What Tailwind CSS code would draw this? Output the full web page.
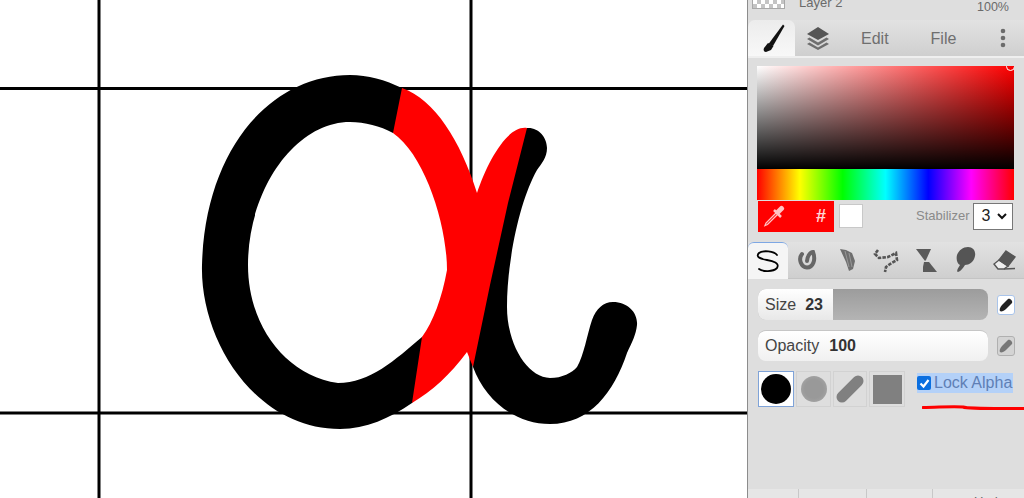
<!DOCTYPE html>
<html lang="en">
<head>
  <meta charset="UTF-8" />
  <title>Lock Alpha</title>
  <script src="https://cdn.jsdelivr.net/npm/@tailwindcss/browser@4"></script>
</head>
<body class="w-[1024px] h-[498px] overflow-hidden flex font-['Liberation_Sans',Arial,sans-serif] bg-white">

  <!-- canvas -->
  <svg class="w-[747px] h-[498px] shrink-0" viewBox="0 0 747 498">
    <path d="M99 0V498M471 0V498M0 88.500H747M0 413H747" stroke="#000" stroke-width="3" fill="none"/>
    <!-- black part of the letter -->
    <path fill="#000" d="M406 90L402 88C385 80 368 75 350 75C270 75 205 150 202 265C200 340 255 429 340 429C366 429 390 418 412 403L418 396L428 335L422 337C395 360 370 383 338 383C285 375 248 325 248 265C248 190 295 122 350 122C365 122 380 126 393 133L400 133Z"/>
    <path fill="#000" d="M523 131L527 128C538 127 547 137 547 148C547 158 541 164 537 170C520 200 507 260 507 307C507 345 528 378 550 378C562 378 572 373 577 367C584 355 587 335 592 320C596 309 603 302 613 302C628 302 638 313 637 325C636 335 632 342 627 353C614 392 590 424 550 424C515 424 485 400 473 367L472 350Z"/>
    <!-- red part -->
    <path fill="#f00" d="M402 88C435 100 460 140 477 193C488 160 508 125 527 128L508 203L490 285L473 367L467 352C450 375 432 391 412 403L422 337C433 322 442 298 447 270C447 225 425 155 393 133Z"/>
  </svg>

  <!-- side panel -->
  <div class="w-[277px] h-[498px] shrink-0 bg-[#dedede] border-l-[1px] border-[#8c8c8c] flex flex-col overflow-hidden">

    <!-- layer row (cut off at the top) -->
    <div class="h-[20px] flex items-start pl-[4px] pr-[15px] text-[13px] text-[#6a6a6a] shrink-0">
      <div class="w-[33px] h-[9px] border border-[#a8a8a8] border-t-0 bg-[repeating-conic-gradient(#c4c4c4_0_25%,#ffffff_0_50%)] bg-[length:8px_8px]"></div>
      <span class="ml-[14px] -mt-[5px] leading-[15px]">Layer 2</span>
      <span class="ml-auto mt-0 leading-[15px] text-[12.500px]">100%</span>
    </div>

    <!-- tabs -->
    <div class="h-[36px] flex items-center shrink-0 bg-[linear-gradient(to_bottom,#e2e2e2,#cfcfcf)] text-[16px] text-[#6f6f6f]">
      <div class="w-[47px] h-[36px] bg-[linear-gradient(to_bottom,#ececec,#f8f8f8)] rounded-t-[7px] flex items-center justify-center">
        <svg width="30" height="36" viewBox="756 20 30 36" fill="#111"><path d="M782 24.500L783.500 26L772 46L767.500 44Z"/><path d="M767 43L772.500 46L770 50L765 52C763 52 762 50 763 48Z"/></svg>
      </div>
      <svg class="ml-[11px]" width="24" height="24" viewBox="0 0 24 24"><path fill="#555" d="M12 1L23 8L12 14L1 8Z"/><path fill="#6e6e6e" d="M3.500 11.500L12 16.500L20.500 11.500L23 13L12 19.500L1 13Z"/><path fill="#6e6e6e" d="M3.500 16.500L12 21.500L20.500 16.500L23 18L12 24L1 18Z"/></svg>
      <span class="ml-[31px] pt-[2px]">Edit</span>
      <span class="ml-[42px] pt-[2px]">File</span>
      <svg class="ml-auto mr-[18px]" width="6" height="20" viewBox="0 0 6 20" fill="#6b6b6b"><circle cx="3" cy="3" r="2.300"/><circle cx="3" cy="10" r="2.300"/><circle cx="3" cy="17" r="2.300"/></svg>
    </div>

    <!-- colour picker -->
    <div class="border-t-[2px] border-[#efefef] pt-[8px] pl-[9px] shrink-0">
      <div class="relative overflow-hidden w-[257px] h-[103px] bg-[linear-gradient(to_bottom,transparent,#000),linear-gradient(to_right,#fff,#f00)]">
        <div class="absolute -right-[1px] -top-[4px] w-[9px] h-[9px] rounded-full border border-white"></div>
      </div>
      <div class="w-[257px] h-[31px] bg-[linear-gradient(to_right,#f00,#ff0,#0f0,#0ff,#00f,#f0f,#f00)]"></div>
      <div class="flex items-center h-[32px]">
        <div class="ml-[1px] w-[76px] h-[31px] bg-[#f00] flex items-center justify-between pl-[4px] pr-[8px] text-[#ffd6d6] text-[18px] font-bold">
          <svg width="24" height="23" viewBox="762 206 24 23" fill="none" stroke="#ffc4c4"><path d="M778 213L781.500 209.500" stroke-width="5" stroke-linecap="round"/><path d="M774 211L781 218" stroke-width="2.500"/><path d="M776 214L766 224L765 226.500L767.500 225.500L777.500 215.500" stroke-width="1.300"/></svg>
          <span>#</span>
        </div>
        <div class="ml-[5px] w-[24px] h-[24px] bg-white border border-[#c8c8c8]"></div>
        <span class="ml-[53px] text-[13px] text-[#8a8a8a]">Stabilizer</span>
        <div class="ml-[4px] w-[40px] h-[27px] bg-white border border-[#777] flex items-center justify-between pl-[7px] pr-[5px] text-[16px] text-[#222]">
          <span>3</span>
          <svg width="10" height="7" viewBox="0 0 10 7" fill="none" stroke="#111" stroke-width="2"><path d="M1 1L5 5L9 1"/></svg>
        </div>
      </div>
    </div>

    <!-- brush type tabs -->
    <div class="mt-[10px] h-[37px] flex items-center shrink-0 bg-[linear-gradient(to_bottom,#e2e2e2,#cfcfcf)] border-b border-[#c4c4c4]">
      <div class="w-[40px] h-[37px] bg-[#f5f5f5] border-t-[1px] border-[#7da7e4] rounded-t-[6px] flex items-center justify-center">
        <svg width="26" height="24" viewBox="0 0 26 24" fill="none" stroke="#000" stroke-width="1.800" stroke-linecap="round"><path d="M22 6C19 2 8 1 4 4C0 8 6 10 12 11C18 12 25 14 22 19C18 23 8 23 4 20"/></svg>
      </div>
      <svg class="ml-[9px] blur-[0.5px]" width="22" height="30" viewBox="797 246 22 30" fill="none" stroke="#666" stroke-width="4" stroke-linecap="round"><path d="M802 255C798 260 801 268 807 268.500C813 268.500 816 261 813 253C810 253 807 258 807 262"/></svg>
      <svg class="ml-[19px] blur-[0.4px]" width="20" height="30" viewBox="838 246 20 30"><path fill="#6f6f6f" d="M840 250L846 251L852 254L855 262L853 270L849 272L846 263Z"/><path d="M845 252L849 268M849 254L852 268" stroke="#999" stroke-width="1"/></svg>
      <svg class="ml-[13px]" width="29" height="30" viewBox="871 246 29 30" fill="none" stroke="#555" stroke-width="2.600" stroke-dasharray="3.500 1.200"><path d="M878 251L875 255L879 259L888 258L896 254L897 261L890 265L886 268L885 273"/></svg>
      <svg class="ml-[14px]" width="25" height="30" viewBox="914 246 25 30" fill="#5a5a5a"><path d="M916 250H931L926 261L925 262Z"/><path d="M924 263H929L937 273H923L923 268Z"/></svg>
      <svg class="ml-[15px]" width="24" height="30" viewBox="954 246 24 30" fill="#555"><path d="M968 248C973 248 976 252 975 257C974 263 969 266 965 266C963 269 961 272 958 273C956 273 958 269 960 266C957 265 956 260 957 256C959 251 963 248 968 248Z"/></svg>
      <svg class="ml-[14px]" width="26" height="30" viewBox="992 246 26 30" fill="none" stroke="#555" stroke-width="1.400"><path d="M999 261L1008 267L1004 270H998L994 265Z" fill="#eee"/><path d="M1006 252L1015 258L1008 267L999 261Z" fill="#555"/><path d="M1004 270L1015 269.500"/></svg>
    </div>

    <!-- size, opacity -->
    <div class="pl-[10px] pr-[9px] pt-[10px] flex flex-col gap-[10px] shrink-0">
      <div class="flex items-center justify-between">
        <div class="w-[230px] h-[31px] rounded-[8px] overflow-hidden flex items-center bg-[linear-gradient(to_bottom,#9c9c9c,#b4b4b4)] text-[16px] text-[#444]">
          <div class="w-[75px] h-full bg-[linear-gradient(to_bottom,#ffffff,#e8e8e8)] flex items-center pl-[7px]">
            <span>Size</span><b class="ml-[9px] text-[#333]">23</b>
          </div>
        </div>
        <div class="w-[18px] h-[20px] rounded-[3px] bg-white border border-[#a9c4ea] flex items-center justify-center">
          <svg width="14" height="14" viewBox="0 0 14 14" fill="#222"><path d="M9 1C11 0 14 3 13 5L7 11C5 13 2 14 1 13C0 12 1 9 3 7Z"/></svg>
        </div>
      </div>
      <div class="flex items-center justify-between">
        <div class="w-[230px] h-[31px] rounded-[8px] bg-[linear-gradient(to_bottom,#ffffff,#f0f0f0)] border-t border-[#c6c6c6] flex items-center pl-[7px] text-[16px] text-[#444]">
          <span>Opacity</span><b class="ml-[10px] text-[#333]">100</b>
        </div>
        <div class="w-[18px] h-[20px] rounded-[3px] bg-[#d4d4d4] border border-[#b0b0b0] flex items-center justify-center">
          <svg width="14" height="14" viewBox="0 0 14 14" fill="#777"><path d="M9 1C11 0 14 3 13 5L7 11C5 13 2 14 1 13C0 12 1 9 3 7Z"/></svg>
        </div>
      </div>
    </div>

    <!-- brush tips, lock alpha -->
    <div class="relative pl-[10px] pt-[10px] flex items-start shrink-0">
      <div class="flex gap-[2px]">
        <div class="w-[36px] h-[36px] bg-white border border-[#7fa3d8] flex items-center justify-center">
          <div class="w-[30px] h-[30px] rounded-full bg-black"></div>
        </div>
        <div class="w-[35px] h-[36px] border border-[#d2d2d2] flex items-center justify-center">
          <div class="w-[26px] h-[26px] rounded-full bg-[radial-gradient(circle,#999_50%,#adadad_100%)]"></div>
        </div>
        <div class="w-[34px] h-[36px] border border-[#d2d2d2] flex items-center justify-center">
          <svg width="28" height="28" viewBox="0 0 28 28"><path d="M6 22L22 6" stroke="#808080" stroke-width="11" stroke-linecap="round"/></svg>
        </div>
        <div class="w-[36px] h-[36px] border border-[#d2d2d2] flex items-center justify-center">
          <div class="w-[29px] h-[29px] bg-[#808080]"></div>
        </div>
      </div>
      <label class="ml-[12px] flex items-center h-[20px] mt-[2px] text-[16px] text-[#5f7fb5] bg-[#b4d1f8] w-[96px] whitespace-nowrap">
        <span class="w-[14px] h-[14px] rounded-[2px] bg-[#0b6fe0] flex items-center justify-center shrink-0">
          <svg width="11" height="11" viewBox="0 0 11 11" fill="none" stroke="#fff" stroke-width="2.200"><path d="M1.500 5.500L4.500 8.500L9.500 2"/></svg>
        </span>
        <span class="ml-[3px]">Lock Alpha</span>
      </label>
      <!-- red marker stroke under the label -->
      <svg class="absolute left-[174px] top-[44px]" width="103" height="6" viewBox="0 0 103 6"><path d="M1 2.500C15 2.500 30 1 41 2C46 4 70 3.500 103 3.500" stroke="#f00" stroke-width="3" fill="none" stroke-linecap="round"/></svg>
    </div>

    <!-- bottom bar (cut off) -->
    <div class="mt-auto h-[9px] flex shrink-0 text-[13px] text-[#666] bg-[#e6e6e6]">
      <div class="w-[51px] border-r border-[#c8c8c8]"></div>
      <div class="w-[68px] border-r border-[#c8c8c8]"></div>
      <div class="w-[66px] border-r border-[#c8c8c8]"></div>
      <div class="flex-1 pl-[41px] pt-[5px] leading-[15px]">Undo</div>
    </div>
  </div>
</body>
</html>
